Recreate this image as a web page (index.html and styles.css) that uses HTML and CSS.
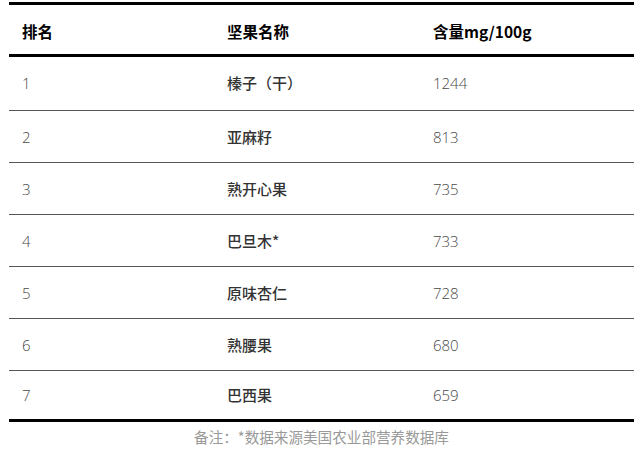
FILE: index.html
```html
<!DOCTYPE html>
<html lang="zh-CN">
<head>
<meta charset="utf-8">
<title>坚果含量排名</title>
<link rel="stylesheet" href="styles.css">
</head>
<body>
<div class="page">
  <div class="table">
    <div class="row head">
      <div class="cell">排名</div>
      <div class="cell">坚果名称</div>
      <div class="cell">含量mg/100g</div>
    </div>
    <div class="row first">
      <div class="cell num">1</div>
      <div class="cell name">榛子（干）</div>
      <div class="cell num">1244</div>
    </div>
    <div class="row">
      <div class="cell num">2</div>
      <div class="cell name">亚麻籽</div>
      <div class="cell num">813</div>
    </div>
    <div class="row">
      <div class="cell num">3</div>
      <div class="cell name">熟开心果</div>
      <div class="cell num">735</div>
    </div>
    <div class="row">
      <div class="cell num">4</div>
      <div class="cell name">巴旦木*</div>
      <div class="cell num">733</div>
    </div>
    <div class="row">
      <div class="cell num">5</div>
      <div class="cell name">原味杏仁</div>
      <div class="cell num">728</div>
    </div>
    <div class="row">
      <div class="cell num">6</div>
      <div class="cell name">熟腰果</div>
      <div class="cell num">680</div>
    </div>
    <div class="row last">
      <div class="cell num">7</div>
      <div class="cell name">巴西果</div>
      <div class="cell num">659</div>
    </div>
  </div>
  <p class="note">备注：*数据来源美国农业部营养数据库</p>
</div>
</body>
</html>
```

FILE: styles.css
```css
html, body {
  margin: 0;
  padding: 0;
  background: #ffffff;
}

.page {
  padding: 2px 9px 0 9px;
  width: 625px;
  font-family: "Noto Sans CJK SC", "Noto Sans", sans-serif;
}

.table {
  display: flex;
  flex-direction: column;
}

.row {
  display: grid;
  grid-template-columns: 205px 206px 1fr;
  align-items: center;
  box-sizing: border-box;
  height: 52px;
  border-bottom: 1px solid #555555;
}

.cell {
  padding-left: 13px;
  font-size: 15px;
  line-height: 20px;
  white-space: nowrap;
}

.head {
  height: 55px;
  border-top: 3px solid #000000;
  border-bottom: 3px solid #000000;
}

.head .cell {
  font-size: 15.5px;
  font-weight: 700;
  color: #000000;
  padding-top: 2px;
}

.first {
  height: 54px;
}

.first .cell {
  padding-bottom: 2px;
}

.last {
  height: 51px;
  border-bottom: 3px solid #000000;
}

.num {
  font-family: "Open Sans", "Noto Sans CJK SC", sans-serif;
  font-weight: 300;
  color: #4a4a4a;
}

.name {
  font-weight: 500;
  color: #333333;
}

.note {
  margin: 5px 0 0 0;
  text-align: center;
  font-size: 14.6px;
  line-height: 20px;
  color: #999999;
}
```
